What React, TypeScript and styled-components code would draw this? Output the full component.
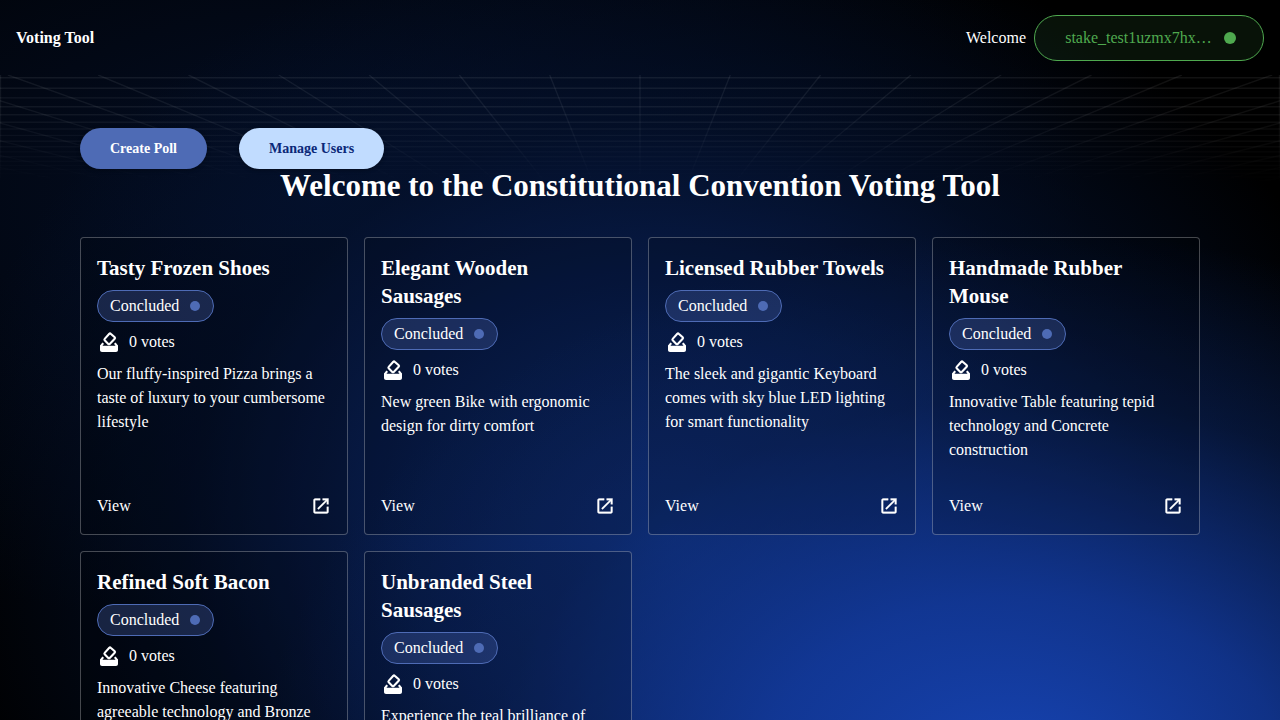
import React from 'react';
import styled, { createGlobalStyle } from 'styled-components';

const GlobalStyle = createGlobalStyle`
  *, *::before, *::after {
    box-sizing: border-box;
  }
  body {
    margin: 0;
    color: #fff;
    background:
      radial-gradient(ellipse 60% 78% at 80% 110%, rgba(24, 72, 190, 0.95) 0%, rgba(20, 62, 168, 0.78) 35%, rgba(14, 46, 120, 0.36) 70%, rgba(8, 26, 70, 0) 100%),
      radial-gradient(ellipse 57% 86% at 52% 74%, rgba(13, 43, 112, 0.95) 0%, rgba(9, 32, 86, 0.85) 35%, rgba(4, 18, 48, 0.65) 66%, rgba(0, 0, 0, 0) 100%),
      radial-gradient(ellipse 60% 60% at 25% 28%, rgba(4, 16, 42, 0.9) 0%, rgba(0, 0, 0, 0) 100%),
      #000;
    background-attachment: fixed;
    font-family: 'Liberation Serif', 'Times New Roman', serif;
    font-size: 16px;
    line-height: 24px;
  }
  h1, h2, p {
    margin: 0;
  }
`;

const Page = styled.div`
  position: relative;
  min-height: 100vh;
`;

const Header = styled.header`
  position: relative;
  display: flex;
  align-items: center;
  justify-content: space-between;
  padding: 15px 16px;
`;

const Brand = styled.a`
  color: inherit;
  font-weight: 700;
  text-decoration: none;
`;

const Account = styled.div`
  display: flex;
  align-items: center;
  gap: 8px;
`;

const Wallet = styled.button`
  display: flex;
  align-items: center;
  gap: 12px;
  height: 46px;
  padding: 0 27px 0 30px;
  border: 1px solid #4fa94f;
  border-radius: 24px;
  background: rgba(76, 175, 80, 0.1);
  color: #4fa94f;
  font: inherit;
`;

const WalletName = styled.span`
  width: 147px;
  overflow: hidden;
  text-overflow: ellipsis;
  white-space: nowrap;
`;

const Dot = styled.span<{ $size: number; $color: string }>`
  flex: none;
  width: ${(p) => p.$size}px;
  height: ${(p) => p.$size}px;
  border-radius: 50%;
  background: ${(p) => p.$color};
`;

const GridArt = styled.svg`
  position: absolute;
  top: 75px;
  left: 0;
  width: 100%;
  height: 120px;
  pointer-events: none;
`;

const Main = styled.main`
  position: relative;
  padding: 52px 80px 32px;
`;

const Actions = styled.div`
  display: flex;
  gap: 32px;
`;

const ActionButton = styled.button<{ $light?: boolean }>`
  padding: 8px 30px;
  border: 0;
  border-radius: 24px;
  background: ${(p) => (p.$light ? '#c1dcff' : '#4e6bb5')};
  color: ${(p) => (p.$light ? '#0b2878' : '#fff')};
  box-shadow: 0 1px 4px rgba(0, 0, 0, 0.3);
  font: 700 14px/25px 'Liberation Serif', 'Times New Roman', serif;
`;

const PageTitle = styled.h1`
  margin-bottom: 34px;
  font-size: 31px;
  line-height: 34px;
  text-align: center;
`;

const PollGrid = styled.div`
  display: grid;
  grid-template-columns: repeat(auto-fill, minmax(256px, 1fr));
  gap: 16px;
`;

const PollCard = styled.article`
  display: flex;
  flex-direction: column;
  align-items: flex-start;
  gap: 8px;
  min-height: 298px;
  padding: 16px;
  border: 1px solid rgba(255, 255, 255, 0.27);
  border-radius: 4px;
  background: rgba(0, 0, 0, 0.16);
`;

const PollName = styled.h2`
  padding-right: 8px;
  font-size: 21px;
  line-height: 28px;
`;

const Status = styled.span`
  display: flex;
  align-items: center;
  gap: 11px;
  height: 32px;
  padding: 0 13px 0 12px;
  border: 1px solid #4e6bb5;
  border-radius: 16px;
  background: rgba(78, 107, 181, 0.3);
`;

const Votes = styled.div`
  display: flex;
  align-items: center;
  gap: 8px;
`;

const ViewLink = styled.a`
  display: flex;
  align-items: center;
  justify-content: space-between;
  width: 100%;
  margin-top: auto;
  color: inherit;
  text-decoration: none;
`;

const HORIZON = 226;
const columns = Array.from({ length: 27 }, (_, i) => i - 13);
const rows = Array.from({ length: 20 }, (_, i) => Math.round((HORIZON - 4510 / (20.15 + i)) * 10) / 10);

function PerspectiveGrid() {
  return (
    <GridArt viewBox="0 0 1280 120" preserveAspectRatio="none" aria-hidden="true">
      <defs>
        <linearGradient id="fade" x1="0" y1="0" x2="0" y2="1">
          <stop offset="0" stopColor="#fff" />
          <stop offset="0.3" stopColor="#fff" stopOpacity="0.85" />
          <stop offset="0.9" stopColor="#fff" stopOpacity="0" />
        </linearGradient>
        <mask id="fadeMask" maskUnits="userSpaceOnUse" x="0" y="0" width="1280" height="120">
          <rect width="1280" height="120" fill="url(#fade)" />
        </mask>
      </defs>
      <g mask="url(#fadeMask)" stroke="#fff" strokeOpacity="0.07" strokeWidth="1.4">
        {columns.map((c) => (
          <line key={c} x1={640 + c * 90.3} y1="0" x2={640 + c * 90.3 * (1 - 120 / HORIZON)} y2="120" />
        ))}
        {rows.map((y) => (
          <line key={y} x1="0" y1={y + 0.5} x2="1280" y2={y + 0.5} />
        ))}
        <path d="M.5 0V120M1279.5 0V120" />
      </g>
    </GridArt>
  );
}

function BallotIcon() {
  return (
    <svg width="24" height="24" viewBox="0 0 24 24" fill="currentColor" aria-hidden="true">
      <path d="M3 15.8h18V20c0 1.1-.9 2-2 2H5c-1.1 0-2-.9-2-2z" />
      <path d="M3 16v-.6l2.4-3L7 13.8 5.4 16zM21 16v-.6l-2.4-3-1.6 1.4 1.6 2.2z" />
      <path
        d="M12.3 3.7 7.7 8.9c-.4.4-.4 1 0 1.4l3.6 3.6c.4.4 1 .4 1.4 0l5-5.2c.4-.4.4-1 0-1.4l-4-3.6c-.4-.4-1-.4-1.4 0z"
        fill="none"
        stroke="currentColor"
        strokeWidth="2.1"
      />
    </svg>
  );
}

function LaunchIcon() {
  return (
    <svg width="20" height="20" viewBox="0 0 24 24" fill="currentColor" stroke="currentColor" strokeWidth="0.4" aria-hidden="true">
      <path d="M19 19H5V5h6V3H5c-1.11 0-2 .9-2 2v14c0 1.1.89 2 2 2h14c1.1 0 2-.9 2-2v-6h-2v6zM14 3v2h3.59l-9.83 9.83 1.41 1.41L19 6.41V10h2V3h-7z" />
    </svg>
  );
}

const polls = [
  { name: 'Tasty Frozen Shoes', text: 'Our fluffy-inspired Pizza brings a taste of luxury to your cumbersome lifestyle' },
  { name: 'Elegant Wooden Sausages', text: 'New green Bike with ergonomic design for dirty comfort' },
  { name: 'Licensed Rubber Towels', text: 'The sleek and gigantic Keyboard comes with sky blue LED lighting for smart functionality' },
  { name: 'Handmade Rubber Mouse', text: 'Innovative Table featuring tepid technology and Concrete construction' },
  { name: 'Refined Soft Bacon', text: 'Innovative Cheese featuring agreeable technology and Bronze construction' },
  { name: 'Unbranded Steel Sausages', text: 'Experience the teal brilliance of' },
];

export default function App() {
  return (
    <>
      <GlobalStyle />
      <Page>
        <PerspectiveGrid />
        <Header>
          <Brand href="#">Voting Tool</Brand>
          <Account>
            <span>Welcome</span>
            <Wallet type="button">
              <WalletName>stake_test1uzmx7hx…</WalletName>
              <Dot $size={12} $color="#4fa94f" />
            </Wallet>
          </Account>
        </Header>
        <Main>
          <Actions>
            <ActionButton type="button">Create Poll</ActionButton>
            <ActionButton type="button" $light>
              Manage Users
            </ActionButton>
          </Actions>
          <PageTitle>Welcome to the Constitutional Convention Voting Tool</PageTitle>
          <PollGrid>
            {polls.map((poll) => (
              <PollCard key={poll.name}>
                <PollName>{poll.name}</PollName>
                <Status>
                  Concluded
                  <Dot $size={10} $color="#4e6bb5" />
                </Status>
                <Votes>
                  <BallotIcon />0 votes
                </Votes>
                <p>{poll.text}</p>
                <ViewLink href="#">
                  View
                  <LaunchIcon />
                </ViewLink>
              </PollCard>
            ))}
          </PollGrid>
        </Main>
      </Page>
    </>
  );
}
